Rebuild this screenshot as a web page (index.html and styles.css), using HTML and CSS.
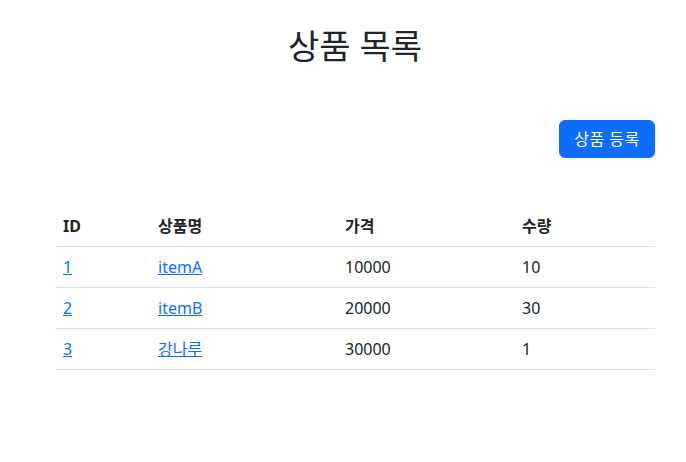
FILE: index.html
```html
<!DOCTYPE html>
<html lang="ko">
<head>
<meta charset="utf-8">
<title>상품 목록</title>
<link rel="stylesheet" href="styles.css">
</head>
<body>
<div class="container">
  <div class="page-header">
    <h2 class="title">상품 목록</h2>
  </div>
  <div class="toolbar">
    <button class="btn btn-primary" type="button">상품 등록</button>
  </div>
  <table class="table">
    <thead>
      <tr>
        <th class="col-id">ID</th>
        <th class="col-name">상품명</th>
        <th class="col-price">가격</th>
        <th class="col-qty">수량</th>
      </tr>
    </thead>
    <tbody>
      <tr>
        <td><a href="#">1</a></td>
        <td><a href="#">itemA</a></td>
        <td>10000</td>
        <td>10</td>
      </tr>
      <tr>
        <td><a href="#">2</a></td>
        <td><a href="#">itemB</a></td>
        <td>20000</td>
        <td>30</td>
      </tr>
      <tr>
        <td><a href="#">3</a></td>
        <td><a href="#">강나루</a></td>
        <td>30000</td>
        <td>1</td>
      </tr>
    </tbody>
  </table>
</div>
</body>
</html>
```
FILE: styles.css
```css
* { box-sizing: border-box; }

body {
  margin: 0;
  background: #ffffff;
  color: #212529;
  font-family: "Noto Sans", "Noto Sans CJK KR", sans-serif;
  font-size: 16px;
  line-height: 24px;
}

.container {
  width: 600px;
  margin-left: 55px;
}

.page-header {
  padding-top: 26px;
  text-align: center;
}

.title {
  margin: 0;
  font-size: 34px;
  font-weight: 400;
  line-height: 40px;
  color: #212529;
}

.toolbar {
  display: flex;
  justify-content: flex-end;
  margin-top: 54px;
}

.btn {
  font-family: inherit;
  font-size: 16px;
  line-height: 24px;
  padding: 6px 12px;
  border: 1px solid transparent;
  border-radius: 6px;
  cursor: pointer;
}

.btn-primary {
  background: #0d6efd;
  border-color: #0d6efd;
  color: #ffffff;
  width: 96px;
  letter-spacing: 0.5px;
}

.table {
  width: 600px;
  margin-top: 48px;
  border-collapse: collapse;
}

.table th,
.table td {
  padding: 8px;
  text-align: left;
  border-bottom: 1px solid #dee2e6;
  line-height: 24px;
}

.table th {
  font-weight: 700;
}

.col-id { width: 95px; }
.col-name { width: 187px; }
.col-price { width: 177px; }
.col-qty { width: 141px; }

.table a {
  color: #0d6efd;
  text-decoration: underline;
}
```
